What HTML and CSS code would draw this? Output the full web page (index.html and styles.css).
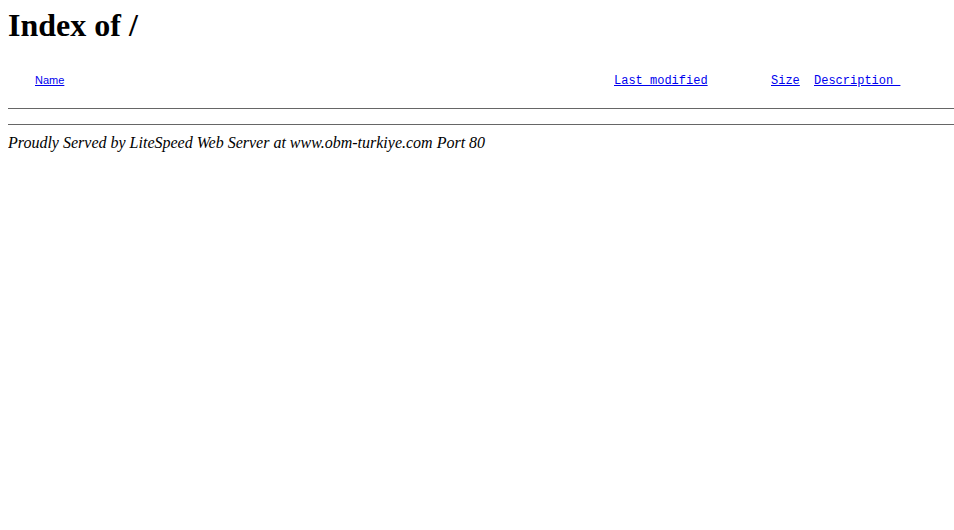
FILE: index.html
```html
<!DOCTYPE html>
<html lang="en">
<head>
  <meta charset="UTF-8">
  <title>Index of /</title>
  <link rel="stylesheet" href="styles.css">
</head>
<body>
  <h1>Index of /</h1>
  <table class="listing">
    <tr>
      <th class="icon"></th>
      <th class="name"><a href="?C=N&amp;O=D">Name</a></th>
      <th class="modified"><a href="?C=M&amp;O=A">Last modified</a></th>
      <th class="size"><a href="?C=S&amp;O=A">Size</a></th>
      <th class="desc"><a href="?C=D&amp;O=A">Description&nbsp;</a></th>
    </tr>
  </table>
  <hr>
  <hr>
  <address>Proudly Served by LiteSpeed Web Server at www.obm-turkiye.com Port 80</address>
</body>
</html>
```

FILE: styles.css
```css
body {
  margin: 8px 0 8px 8px;
  font-family: "Liberation Serif", "Times New Roman", serif;
  color: #000;
  background: #fff;
}

h1 {
  font-size: 32px;
  margin: 0;
  line-height: 34px;
}

a {
  color: #0000ee;
}

.listing {
  border-collapse: collapse;
  margin-top: 32px;
  height: 19px;
}

.listing th {
  padding: 0;
  font-weight: normal;
  text-align: left;
  vertical-align: top;
  font-family: "Liberation Mono", "Courier New", monospace;
  font-size: 12px;
}

.listing .icon {
  width: 27px;
}

.listing .name {
  width: 579px;
  font-family: "Liberation Sans", Arial, sans-serif;
  font-size: 11px;
}

.listing .modified {
  width: 157px;
}

.listing .size {
  width: 29px;
}

.listing .desc {
  padding-left: 14px;
}

hr {
  margin: 15px 0 8px;
  border: 0;
  border-top: 1px solid #666;
  height: 0;
}

address {
  font-size: 16px;
  margin-top: 9px;
}
```
